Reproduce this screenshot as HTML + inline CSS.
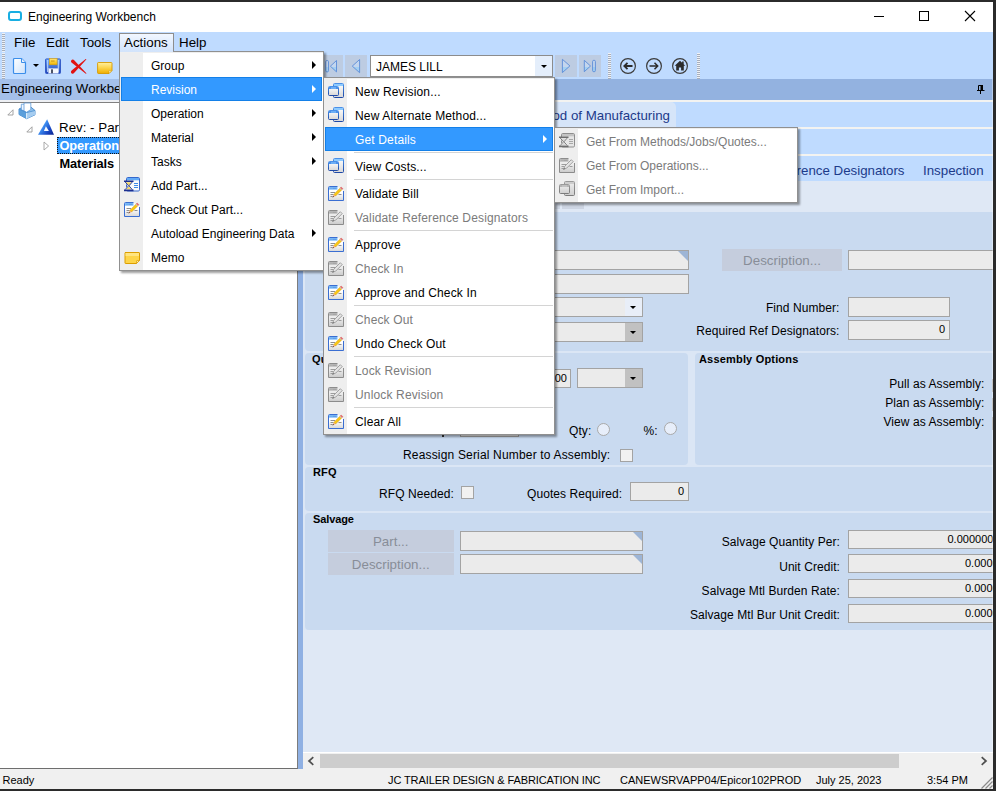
<!DOCTYPE html>
<html>
<head>
<meta charset="utf-8">
<title>Engineering Workbench</title>
<style>
*{box-sizing:border-box;margin:0;padding:0}
html,body{width:996px;height:791px;overflow:hidden;background:#2b2b2b}
body{position:relative;font-family:"Liberation Sans",Arial,sans-serif;font-size:12px;color:#000}
.a{position:absolute}
.t{position:absolute;white-space:nowrap;line-height:1}
#win{left:0;top:2px;width:993px;height:787px;background:#fff;overflow:hidden}
/* all children of #win use window coordinates offset by -2 in y; so use wrapper */
#w{position:absolute;left:0;top:-2px;width:993px;height:791px}
.grip{position:absolute;width:3px;background:repeating-linear-gradient(to bottom,#eef1f6 0,#eef1f6 1px,#a7afbd 1px,#a7afbd 2px)}
.nav{position:absolute;top:55px;height:22px;background:#bdcce2}
.fld{position:absolute;background:#ebebeb;border:1px solid #a3a3a3}
.btn{position:absolute;background:#c5cddd;color:#888d98;font-size:13.33px;text-align:center}
.grp{position:absolute;background:#c9daf0;border-radius:4px}
.gl{position:absolute;font-weight:bold;font-size:11px;white-space:nowrap;line-height:1;letter-spacing:.18px}
.lb{position:absolute;white-space:nowrap;font-size:12px;line-height:1;text-align:right;letter-spacing:.07px}
.menu{position:absolute;background:#fff;border:1px solid #909090;box-shadow:2px 2px 2px rgba(0,0,0,.38)}
.menu .gut{position:absolute;left:0;top:0;bottom:0;width:23px;background:#eeeeee}
.menu:before{content:"";position:absolute;left:0;right:0;top:0;height:1px;background:#eeeeee}
.mi{position:absolute;left:1px;right:1px;height:24px;line-height:24px;font-size:12px;white-space:nowrap}
#m2 .mi{letter-spacing:.15px}
.mi span{position:absolute;left:30px;top:1px}
.mi.dis{color:#7b7b7b}
.mi.hot{background:#3399ff;color:#fff;box-shadow:inset 0 0 0 1px #1480e8}
.sep{position:absolute;left:30px;right:1px;height:1px;background:#d4d4d4}
.arr{position:absolute;right:6px;top:8px;width:0;height:0;border-left:4px solid #000;border-top:4px solid transparent;border-bottom:4px solid transparent}
.hot .arr{border-left-color:#fff}
.ic{position:absolute;left:3px;top:4px;width:16px;height:16px}
</style>
</head>
<body>
<div id="win" class="a"><div id="w">

<!-- TITLE BAR -->
<div class="a" style="left:8px;top:11px;width:14px;height:10px;border:2px solid #19aee2;border-radius:3px;background:#fff"></div>
<div class="t" style="left:28px;top:10px;font-size:12px;line-height:14px">Engineering Workbench</div>
<svg class="a" style="left:860px;top:2px" width="133" height="30" viewBox="0 0 133 30">
 <path d="M14 14.5h10" stroke="#000" stroke-width="1" fill="none"/>
 <rect x="59.5" y="9.5" width="9" height="9" stroke="#000" stroke-width="1" fill="none"/>
 <path d="M105 9l10 10M115 9l-10 10" stroke="#000" stroke-width="1.1" fill="none"/>
</svg>

<!-- MENU BAR + TOOLBAR BACKGROUND -->
<div class="a" style="left:0;top:32px;width:993px;height:47px;background:#bfdbff"></div>
<div class="grip" style="left:2px;top:33px;height:19px"></div>
<div class="grip" style="left:2px;top:53px;height:26px"></div>
<div class="t" style="left:14px;top:35px;font-size:13.33px;line-height:15px">File</div>
<div class="t" style="left:46px;top:35px;font-size:13.33px;line-height:15px">Edit</div>
<div class="t" style="left:80px;top:35px;font-size:13.33px;line-height:15px">Tools</div>
<div class="a" style="left:119px;top:33px;width:55px;height:20px;border:1px solid #8d8d8d;border-bottom:none;background:linear-gradient(#f2f7ff,#cfe2fb)"></div>
<div class="t" style="left:124px;top:35px;font-size:13.33px;line-height:15px">Actions</div>
<div class="t" style="left:179px;top:35px;font-size:13.33px;line-height:15px">Help</div>

<!-- TOOLBAR ICONS -->
<!-- new doc -->
<svg class="a" style="left:12px;top:57px" width="16" height="18" viewBox="0 0 16 18">
 <defs><linearGradient id="gdoc" x1="0" y1="0" x2="1" y2="1"><stop offset="0" stop-color="#ffffff"/><stop offset="1" stop-color="#cfe3fb"/></linearGradient></defs>
 <path d="M2.5 1.5h7l4 4v10a1 1 0 0 1-1 1h-10a1 1 0 0 1-1-1v-13a1 1 0 0 1 1-1z" fill="url(#gdoc)" stroke="#3b8eea" stroke-width="1.2"/>
 <path d="M9.5 1.5v4h4" fill="#eaf3ff" stroke="#3b8eea" stroke-width="1"/>
</svg>
<div class="a" style="left:33px;top:64px;width:0;height:0;border-top:3px solid #000;border-left:3px solid transparent;border-right:3px solid transparent"></div>
<!-- save -->
<svg class="a" style="left:45px;top:58px" width="16" height="16" viewBox="0 0 16 16">
 <defs><linearGradient id="gsv" x1="0" y1="0" x2="0" y2="1"><stop offset="0" stop-color="#6aa6f7"/><stop offset="1" stop-color="#2243b8"/></linearGradient>
 <linearGradient id="gsy" x1="0" y1="0" x2="0" y2="1"><stop offset="0" stop-color="#ffe678"/><stop offset="1" stop-color="#f2b500"/></linearGradient></defs>
 <rect x=".5" y=".9" width="15" height="14.600" rx=".9" fill="url(#gsv)" stroke="#2c55c4" stroke-width=".9"/>
 <rect x="2" y="2" width="1.300" height="12" fill="#b9d5fb" opacity=".85"/>
 <rect x="12.700" y="2" width="1.300" height="12" fill="#b9d5fb" opacity=".85"/>
 <rect x="4.300" y=".5" width="7.800" height="6.300" fill="url(#gsy)" stroke="#d6a00e" stroke-width=".6"/>
 <rect x="6" y="2.600" width="3.600" height=".9" fill="#c78e08"/>
 <rect x="3.500" y="10.400" width="9.800" height="5" fill="#f4f7fd" stroke="#aebfe3" stroke-width=".5"/>
 <rect x="6" y="11.300" width="2" height="4" fill="#4c5468"/>
</svg>
<!-- red X -->
<svg class="a" style="left:70px;top:58px" width="18" height="17" viewBox="0 0 18 17">
 <path d="M1.200 2.600C2 1.400 3.300 1.300 4.200 2.200L16.400 15.300C16.600 15.700 16.100 16 15.800 15.700L1.800 4.800C1 4.200.8 3.300 1.200 2.600z" fill="#e11212"/>
 <path d="M1 13.600C.7 14.800 1.600 16 2.900 15.700C3.600 15.500 4.100 15.100 4.500 14.600L16.300 1.500C16.600 1.100 16.100.7 15.700 1L2.200 12C1.600 12.500 1.200 13 1 13.600z" fill="#e11212"/>
</svg>
<!-- memo -->
<svg class="a" style="left:97px;top:61px" width="16" height="14" viewBox="0 0 16 14">
 <defs><linearGradient id="gmemo" x1="0" y1="0" x2="0" y2="1"><stop offset="0" stop-color="#fff0a0"/><stop offset=".5" stop-color="#fbd34a"/><stop offset="1" stop-color="#eead00"/></linearGradient></defs>
 <path d="M1.300 1.500h13a.7.7 0 0 1 .7.700v7.300l-3 3h-10.700a.7.700 0 0 1-.7-.7v-9.600a.7.700 0 0 1 .7-.7z" fill="url(#gmemo)" stroke="#d79a00" stroke-width=".9"/>
 <path d="M14.800 9.600h-2.100a.7.700 0 0 0-.7.700v2.100z" fill="#fff8d8" stroke="#d79a00" stroke-width=".6"/>
</svg>
<!-- nav buttons -->
<div class="nav" style="left:324px;width:19px"></div>
<div class="nav" style="left:345px;width:22px"></div>
<svg class="a" style="left:324px;top:55px" width="44" height="22" viewBox="0 0 44 22">
 <defs><linearGradient id="gnv" x1="0" y1="0" x2="0" y2="1"><stop offset="0" stop-color="#c4d6ee"/><stop offset=".55" stop-color="#c4d6ee"/><stop offset=".56" stop-color="#a4d0f2"/><stop offset="1" stop-color="#a4d0f2"/></linearGradient></defs>
 <rect x="1.700" y="5.500" width="2.800" height="11.400" rx="1.200" fill="url(#gnv)" stroke="#5a8bd8" stroke-width=".9"/>
 <path d="M12.500 5.500v11.400l-6.100-5.700z" fill="url(#gnv)" stroke="#5a8bd8" stroke-width=".9" stroke-linejoin="round"/>
 <path d="M35.600 4.500v13.200l-7.300-6.600z" fill="url(#gnv)" stroke="#5a8bd8" stroke-width=".9" stroke-linejoin="round"/>
</svg>
<!-- combo -->
<div class="a" style="left:370px;top:55px;width:183px;height:22px;background:#fff;border:1px solid #8c8c8c"></div>
<div class="a" style="left:535px;top:56px;width:17px;height:20px;background:#e4eefb"></div>
<div class="a" style="left:541px;top:65px;width:0;height:0;border-top:3px solid #000;border-left:3px solid transparent;border-right:3px solid transparent"></div>
<div class="t" style="left:376px;top:60px;font-size:12px;line-height:14px">JAMES LILL</div>
<div class="nav" style="left:555px;width:22px"></div>
<div class="nav" style="left:579px;width:22px"></div>
<svg class="a" style="left:555px;top:55px" width="46" height="22" viewBox="0 0 46 22">
 <path d="M7.400 4.300v13.300l7.500-6.700z" fill="url(#gnv)" stroke="#5a8bd8" stroke-width=".9" stroke-linejoin="round"/>
 <path d="M29.300 5.300v11.400l6.200-5.700z" fill="url(#gnv)" stroke="#5a8bd8" stroke-width=".9" stroke-linejoin="round"/>
 <rect x="37.600" y="5.300" width="2.800" height="11.400" rx="1.200" fill="url(#gnv)" stroke="#5a8bd8" stroke-width=".9"/>
</svg>
<div class="grip" style="left:608px;top:53px;height:26px"></div>
<svg class="a" style="left:618px;top:56px" width="72" height="20" viewBox="0 0 72 20">
 <g fill="none" stroke="#3c3c3c" stroke-width="1.2">
  <circle cx="10" cy="10" r="7.4"/><circle cx="36" cy="10" r="7.4"/><circle cx="62" cy="10" r="7.4"/>
 </g>
 <path d="M14.5 10h-8M9.5 6.8L6.3 10l3.2 3.2" fill="none" stroke="#2b2b2b" stroke-width="1.8"/>
 <path d="M31.5 10h8M36.500 6.8L39.700 10l-3.200 3.200" fill="none" stroke="#2b2b2b" stroke-width="1.5"/>
 <path d="M62 4.800l-5.300 4.900h1.500v4.700h2.700v-3h2.200v3h2.700v-4.700h1.500l-1.600-1.500v-2.600h-1.600v1.100z" fill="#2b2b2b"/>
</svg>
<div class="grip" style="left:697px;top:53px;height:26px"></div>


<!-- LEFT PANEL -->
<div class="a" style="left:0;top:79px;width:298px;height:21px;background:#a4c0ea"></div><div class="a" style="left:0;top:100px;width:298px;height:2px;background:#eef0f4"></div>
<div class="t" style="left:1px;top:81px;font-size:13.33px;line-height:15px">Engineering Workbench</div>
<div class="a" style="left:0;top:102px;width:298px;height:667px;background:#fff;border-top:1px solid #808080;border-right:1px solid #7d7d7d;border-bottom:1px solid #6e6e6e"></div>
<!-- tree node 1 -->
<svg class="a" style="left:7px;top:109px" width="7" height="7" viewBox="0 0 7 7"><path d="M6 .8v5.200h-5.200z" fill="#fff" stroke="#9a9a9a" stroke-width=".9"/></svg>
<svg class="a" style="left:18px;top:102px" width="18" height="18" viewBox="0 0 18 18">
 <path d="M1 7l4-1.800h8l4 3.300v4.300l-8.400 3.900-7.600-4.200z" fill="#8fc0ea" stroke="#3f86cc" stroke-width=".9" stroke-linejoin="round"/>
 <path d="M1 7l7.600 3.600v6.100l-7.600-4.200z" fill="#5b9fdb"/>
 <path d="M8.600 10.600l8.400-2.100v4.300l-8.400 3.900z" fill="#a6cdf0"/>
 <path d="M3.300 2.200h4.500v7.400l-4.500-1.800z" fill="#eef6ff" stroke="#5f9bd8" stroke-width=".8"/>
 <path d="M6 1h6.800v6.500l-4.200 2.800-2.600-1.300z" fill="#ffffff" stroke="#5f9bd8" stroke-width=".8"/>
 <path d="M8.600 10.600v6" stroke="#e6f2fc" stroke-width="1"/>
 <path d="M1 7l7.600 3.600 8.400-2.100" fill="none" stroke="#3f86cc" stroke-width=".7"/>
</svg>
<!-- node 2 -->
<svg class="a" style="left:26px;top:126px" width="7" height="7" viewBox="0 0 7 7"><path d="M6 .8v5.200h-5.200z" fill="#fff" stroke="#9a9a9a" stroke-width=".9"/></svg>
<svg class="a" style="left:38px;top:119px" width="17" height="17" viewBox="0 0 17 17">
 <defs><linearGradient id="gtr" x1="0" y1=".2" x2="1" y2=".9"><stop offset="0" stop-color="#9fd2ff"/><stop offset=".35" stop-color="#3d8df0"/><stop offset=".7" stop-color="#1a49c4"/><stop offset="1" stop-color="#0a2390"/></linearGradient></defs>
 <path d="M9.100.2l6.900 15.600h-16z" fill="url(#gtr)"/>
 <path d="M7.900 7.300l3 4.700h-5z" fill="#f7fbff"/>
</svg>
<div class="t" style="left:59px;top:120px;font-size:13.33px;line-height:15px">Rev: - Part:</div>
<!-- node 3 -->
<svg class="a" style="left:43px;top:141px" width="7" height="10" viewBox="0 0 7 10"><path d="M1 1l4.600 4-4.600 4z" fill="#fff" stroke="#a0a0a0" stroke-width=".9"/></svg>
<div class="a" style="left:57px;top:137px;width:70px;height:17px;background:#3399ff;border:1px dotted #111"></div>
<div class="t" style="left:59.500px;top:138px;font-size:12.8px;line-height:15px;font-weight:bold;letter-spacing:-.1px;color:#fff">Operations</div>
<div class="t" style="left:59.500px;top:155.500px;font-size:12.8px;line-height:15px;font-weight:bold;letter-spacing:-.1px">Materials</div>

<!-- SPLITTER -->
<div class="a" style="left:298px;top:79px;width:5px;height:690px;background:#8fb0e3"></div>

<!-- RIGHT PANEL -->
<div class="a" style="left:303px;top:79px;width:690px;height:690px;background:#dfe8f5;overflow:hidden">
<div class="a" style="left:-303px;top:-79px;width:996px;height:791px">
<!-- header band -->
<div class="a" style="left:303px;top:79px;width:690px;height:21px;background:#93b2e0"></div>
<svg class="a" style="left:977px;top:85px" width="8" height="9" viewBox="0 0 8 9"><path d="M1.500 5V.5h4V5" fill="none" stroke="#000"/><rect x="3.500" y="0" width="2.500" height="5" fill="#000"/><path d="M0 5.500h7.500" stroke="#000"/><path d="M3.500 6v3" stroke="#000"/></svg>
<!-- tab rows -->
<div class="a" style="left:303px;top:100px;width:690px;height:81px;background:#f3f3f1"></div>
<div class="a" style="left:303px;top:102px;width:690px;height:25px;background:#bfdbff"></div>
<div class="a" style="left:303px;top:129px;width:690px;height:25px;background:#bfdbff"></div>
<div class="a" style="left:303px;top:156px;width:690px;height:25px;background:#bfdbff"></div>
<div class="a" style="left:500px;top:102px;width:176px;height:25px;background:#d6e5f9;border-radius:0 5px 0 0"></div>
<div class="t" style="right:326px;top:108px;font-size:13.300px;line-height:16px;color:#1c3a8a">Method of Manufacturing</div>
<div class="t" style="right:91.500px;top:163px;font-size:13.300px;line-height:16px;color:#1c3a8a">Reference Designators</div>
<div class="t" style="left:923px;top:163px;font-size:13.300px;line-height:16px;color:#1c3a8a">Inspection</div>
<!-- strip -->
<div class="a" style="left:562px;top:188px;width:22px;height:21px;background:#cdd5e3"></div><div class="a" style="left:538px;top:188px;width:22px;height:21px;background:#cdd5e3"></div>
<!-- content -->
<div class="a" style="left:303px;top:212px;width:690px;height:418px;background:#dbe6f5"></div>
<div class="grp" style="left:305px;top:212px;width:700px;height:139px;border-radius:0 0 0 4px"></div>
<div class="grp" style="left:305px;top:353px;width:383px;height:112px"></div>
<div class="grp" style="left:695px;top:353px;width:320px;height:112px"></div>
<div class="grp" style="left:305px;top:467px;width:700px;height:44px"></div>
<div class="grp" style="left:305px;top:513px;width:700px;height:117px;border-radius:4px 0 0 4px"></div>

<!-- group 1 -->
<div class="fld" style="left:400px;top:250px;width:289px;height:20px"></div>
<div class="a" style="left:678px;top:251px;width:0;height:0;border-top:10px solid #9db5d6;border-left:10px solid transparent"></div>
<div class="fld" style="left:400px;top:274px;width:289px;height:20px"></div>
<div class="fld" style="left:450px;top:297px;width:193px;height:20px"></div>
<div class="a" style="left:625px;top:298px;width:17px;height:18px;background:#e8eef8"></div>
<div class="a" style="left:630px;top:306px;width:0;height:0;border-top:3px solid #000;border-left:3px solid transparent;border-right:3px solid transparent"></div>
<div class="fld" style="left:450px;top:322px;width:193px;height:20px"></div>
<div class="a" style="left:625px;top:323px;width:17px;height:18px;background:#c1c1c1"></div>
<div class="a" style="left:630px;top:331px;width:0;height:0;border-top:3px solid #000;border-left:3px solid transparent;border-right:3px solid transparent"></div>
<div class="btn" style="left:722px;top:249px;width:120px;height:22px;line-height:23.500px">Description...</div>
<div class="fld" style="left:848px;top:250px;width:160px;height:20px"></div>
<div class="lb" style="right:156.500px;top:301px;line-height:14px">Find Number:</div>
<div class="fld" style="left:848px;top:297px;width:102px;height:20px"></div>
<div class="lb" style="right:156.500px;top:323.500px;line-height:14px">Required Ref Designators:</div>
<div class="fld" style="left:848px;top:320px;width:102px;height:20px"></div>
<div class="t" style="left:939px;top:323px;font-size:11px;line-height:12px">0</div>

<!-- group 2 -->
<div class="gl" style="left:312px;top:354px">Quantity</div>
<div class="fld" style="left:500px;top:369px;width:71px;height:19px"></div>
<div class="t" style="right:429px;top:372px;font-size:11px;line-height:12px">1.00</div>
<div class="fld" style="left:577px;top:368px;width:66px;height:20px"></div>
<div class="a" style="left:625px;top:369px;width:17px;height:18px;background:#c1c1c1"></div>
<div class="a" style="left:630px;top:377px;width:0;height:0;border-top:3px solid #000;border-left:3px solid transparent;border-right:3px solid transparent"></div>
<div class="fld" style="left:460px;top:418px;width:59px;height:19px"></div>
<div class="lb" style="left:569px;top:424px;line-height:14px">Qty:</div>
<div class="a" style="left:597px;top:423px;width:13px;height:13px;border-radius:50%;border:1px solid #a9a9a9;background:#e7eefa"></div>
<div class="lb" style="left:643.500px;top:424px;line-height:14px">%:</div>
<div class="a" style="left:664px;top:422px;width:13px;height:13px;border-radius:50%;border:1px solid #a9a9a9;background:#e7eefa"></div>
<div class="lb" style="left:403px;top:448px;line-height:14px;letter-spacing:.17px">Reassign Serial Number to Assembly:</div>
<div class="fld" style="left:620px;top:448.500px;width:13px;height:13px;background:#f1f1f1"></div>

<div class="a" style="left:442px;top:434px;width:1.500px;height:3px;background:#333"></div>
<!-- group 3 -->
<div class="gl" style="left:699px;top:354px">Assembly Options</div>
<div class="lb" style="right:11.500px;top:377px;line-height:14px">Pull as Assembly:</div>
<div class="lb" style="right:11.500px;top:396px;line-height:14px">Plan as Assembly:</div>
<div class="lb" style="right:11.500px;top:415px;line-height:14px">View as Assembly:</div>
<div class="fld" style="left:991.500px;top:379px;width:13px;height:13px"></div>
<div class="fld" style="left:991.500px;top:398px;width:13px;height:13px"></div>
<div class="fld" style="left:991.500px;top:417px;width:13px;height:13px"></div>

<!-- group 4 -->
<div class="gl" style="left:313px;top:467px">RFQ</div>
<div class="lb" style="left:379px;top:487px;line-height:14px">RFQ Needed:</div>
<div class="fld" style="left:461px;top:486px;width:13px;height:13px;background:#f1f1f1"></div>
<div class="lb" style="left:527px;top:487px;line-height:14px">Quotes Required:</div>
<div class="fld" style="left:630px;top:482px;width:59px;height:19px"></div>
<div class="t" style="left:678px;top:485px;font-size:11px;line-height:12px">0</div>

<!-- group 5 -->
<div class="gl" style="left:313px;top:514px;letter-spacing:-.12px">Salvage</div>
<div class="btn" style="left:328px;top:530px;width:125.500px;height:22px;line-height:23px">Part...</div>
<div class="btn" style="left:328px;top:553px;width:125.500px;height:22px;line-height:23px">Description...</div>
<div class="fld" style="left:460px;top:531px;width:183px;height:20px"></div>
<div class="a" style="left:633px;top:532px;width:0;height:0;border-top:9px solid #9db5d6;border-left:9px solid transparent"></div>
<div class="fld" style="left:460px;top:554px;width:183px;height:20px"></div>
<div class="a" style="left:633px;top:555px;width:0;height:0;border-top:9px solid #9db5d6;border-left:9px solid transparent"></div>
<div class="lb" style="right:156px;top:535px;line-height:14px">Salvage Quantity Per:</div>
<div class="lb" style="right:156px;top:560px;line-height:14px">Unit Credit:</div>
<div class="lb" style="right:156px;top:584px;line-height:14px">Salvage Mtl Burden Rate:</div>
<div class="lb" style="right:156px;top:608px;line-height:14px">Salvage Mtl Bur Unit Credit:</div>
<div class="fld" style="left:848px;top:530px;width:160px;height:19px"></div>
<div class="fld" style="left:848px;top:554px;width:160px;height:19px"></div>
<div class="fld" style="left:848px;top:579px;width:160px;height:19px"></div>
<div class="fld" style="left:848px;top:604px;width:160px;height:19px"></div>
<div class="t" style="left:947.500px;top:533px;font-size:11px;line-height:12px">0.00000000</div>
<div class="t" style="left:965px;top:557px;font-size:11px;line-height:12px">0.00000</div>
<div class="t" style="left:965px;top:582px;font-size:11px;line-height:12px">0.00000</div>
<div class="t" style="left:965px;top:607px;font-size:11px;line-height:12px">0.00000</div>

<!-- right edge strip -->
<div class="a" style="left:992px;top:79px;width:1px;height:673px;background:rgba(255,255,255,.35)"></div>
<!-- scrollbar -->
<div class="a" style="left:303px;top:752px;width:690px;height:17px;background:#f0f0f0;border-top:1px solid #fff"></div>
<div class="a" style="left:320px;top:754px;width:579px;height:14px;background:#cdcdcd"></div>
<svg class="a" style="left:307px;top:756px" width="8" height="10" viewBox="0 0 8 10"><path d="M6.300 1.200L2 5l4.300 3.800" stroke="#505050" stroke-width="1.700" fill="none"/></svg>
<svg class="a" style="left:980px;top:756px" width="8" height="10" viewBox="0 0 8 10"><path d="M1.700 1.200L6 5l-4.300 3.800" stroke="#505050" stroke-width="1.700" fill="none"/></svg>
</div></div>


<!-- STATUS BAR -->
<div class="a" style="left:0;top:769px;width:993px;height:20px;background:#f0f0f0"></div>
<div class="t" style="left:2.500px;top:774px;font-size:11px;line-height:12px">Ready</div>
<div class="t" style="left:388px;top:774px;font-size:11px;line-height:12px;letter-spacing:-.1px">JC TRAILER DESIGN &amp; FABRICATION INC</div>
<div class="t" style="left:620px;top:774px;font-size:11px;line-height:12px">CANEWSRVAPP04/Epicor102PROD</div>
<div class="t" style="left:816px;top:774px;font-size:11px;line-height:12px">July 25, 2023</div>
<div class="t" style="left:927px;top:774px;font-size:11px;line-height:12px">3:54 PM</div>
<svg class="a" style="left:980px;top:776px" width="13" height="13" viewBox="0 0 13 13"><path d="M12.500 1.500l-11 11M12.500 5.500l-7 7M12.500 9.500l-3 3" stroke="#8a8a8a" stroke-width="1.200" fill="none"/></svg>


<!-- MENUS -->
<!--MENUS--><div class="menu" id="m1" style="left:119px;top:51px;width:205px;height:220px"><div class="gut"></div>
<div class="mi" style="top:1px"><span>Group</span><i class="arr"></i></div>
<div class="mi hot" style="top:25px"><span>Revision</span><i class="arr"></i></div>
<div class="mi" style="top:49px"><span>Operation</span><i class="arr"></i></div>
<div class="mi" style="top:73px"><span>Material</span><i class="arr"></i></div>
<div class="mi" style="top:97px"><span>Tasks</span><i class="arr"></i></div>
<div class="mi" style="top:121px"><svg class="ic" viewBox="0 0 16 16"><rect x="2.500" y=".5" width="13" height="13.500" rx="1.200" fill="#fbfbfb" stroke="#3467cc"/><rect x="3" y="1" width="12" height="2.300" fill="#62aaf6"/><path d="M10 6.500h4M10 8.500h4M10 10.500h4" stroke="#3f8be8" stroke-width="1.100"/><path d="M.5 4h8.500v1.200l-3.200 3.600 3.200 3.600v1.400h-8.500v-1.400l3.200-3.600-3.200-3.600z" fill="#fff"/><path d="M1.600 5.300h6.300l-3.150 3.500zM4.750 9.200l2.600 3h-5.200z" fill="#f1d66b"/><path d="M1.200 5l3.300 3.800-3.300 3.800M8.300 5l-3.300 3.800 3.300 3.800" fill="none" stroke="#1c2f8f" stroke-width=".9"/><path d="M0 3.400h9.500v1.700h-9.500zM0 12.500h9.500v1.800h-9.500z" fill="#1c2f8f"/></svg><span>Add Part...</span></div>
<div class="mi" style="top:145px"><svg class="ic" viewBox="0 0 16 16"><linearGradient id="gnbc" x1="0" y1="0" x2="0" y2="1"><stop offset="0" stop-color="#ffffff"/><stop offset=".45" stop-color="#ffffff"/><stop offset="1" stop-color="#dadada"/></linearGradient><path d="M1 2h9l5 3.500v9.500h-14z" fill="url(#gnbc)"/><path d="M.5 15.500v-13a1 1 0 0 1 1-1h8M.5 15.500h15v-9.500" fill="none" stroke="#3a6ed2" stroke-width="1"/><rect x="1" y="2" width="8.500" height="2.700" fill="#7cbcf8"/><path d="M2.500 3.300h1M4.500 3.300h4" stroke="#3a6ed2" stroke-width=".9" opacity=".55"/><path d="M2.500 7.500h4.500M2.500 9.500h3M2.500 11.500h2M10.500 9.500h3" stroke="#8f8f8f" stroke-width="1" fill="none"/><path d="M12 3.200l1.700 1.700-6.200 6.200-1.700-1.700z" fill="#fbc913" stroke="#c98c00" stroke-width=".5"/><path d="M12.200 3l1-1 1.700 1.700-1 1z" fill="#ee6e6e" stroke="#c64545" stroke-width=".45"/><path d="M11.600 3.600l.55-.55 1.700 1.700-.55.550z" fill="#cfcfcf"/><path d="M5.800 9.400l1.700 1.700-3 1.300z" fill="#f2a57c"/><path d="M4.500 12.400l1.300-.55-.75-.75z" fill="#111"/></svg><span>Check Out Part...</span></div>
<div class="mi" style="top:169px"><span>Autoload Engineering Data</span><i class="arr"></i></div>
<div class="mi" style="top:193px"><svg class="ic" viewBox="0 0 16 16"><path d="M1 3.500h14a.5.5 0 0 1 .5.500v7.500l-3 3h-11a.5.5 0 0 1-.5-.5v-10a.5.5 0 0 1 .5-.5z" fill="#fdd54a" stroke="#dc9e00"/><path d="M1.500 4h13.500v3h-13.500z" fill="#ffe88e" opacity=".8"/><path d="M15.300 11.500h-2.300a.5.5 0 0 0-.5.500v2.300z" fill="#fff7d6" stroke="#dc9e00" stroke-width=".7"/></svg><span>Memo</span></div>
</div>
<div class="menu" id="m2" style="left:323px;top:77px;width:232px;height:358px"><div class="gut"></div>
<div class="mi" style="top:1px"><svg class="ic" viewBox="0 0 16 16"><linearGradient id="gwc" x1="0" y1="0" x2="0" y2="1"><stop offset="0" stop-color="#4a90e8"/><stop offset="1" stop-color="#1d48a6"/></linearGradient><linearGradient id="gwcb" x1="0" y1="0" x2="0" y2="1"><stop offset="0" stop-color="#ffffff"/><stop offset="1" stop-color="#d8d8d8"/></linearGradient><rect x="5.500" y=".5" width="10" height="14" rx="1" fill="url(#gwcb)" stroke="url(#gwc)"/><rect x="6" y="1" width="9" height="2" fill="#8ecbff"/><rect x=".5" y="3.500" width="10" height="9" rx="1" fill="url(#gwcb)" stroke="url(#gwc)"/><rect x="1" y="4" width="9" height="2" fill="#4a90ea"/><rect x="3" y="4.500" width="5" height="1" fill="#8ecbff"/></svg><span>New Revision...</span></div>
<div class="mi" style="top:25px"><svg class="ic" viewBox="0 0 16 16"><linearGradient id="gwc" x1="0" y1="0" x2="0" y2="1"><stop offset="0" stop-color="#4a90e8"/><stop offset="1" stop-color="#1d48a6"/></linearGradient><linearGradient id="gwcb" x1="0" y1="0" x2="0" y2="1"><stop offset="0" stop-color="#ffffff"/><stop offset="1" stop-color="#d8d8d8"/></linearGradient><rect x="5.500" y=".5" width="10" height="14" rx="1" fill="url(#gwcb)" stroke="url(#gwc)"/><rect x="6" y="1" width="9" height="2" fill="#8ecbff"/><rect x=".5" y="3.500" width="10" height="9" rx="1" fill="url(#gwcb)" stroke="url(#gwc)"/><rect x="1" y="4" width="9" height="2" fill="#4a90ea"/><rect x="3" y="4.500" width="5" height="1" fill="#8ecbff"/></svg><span>New Alternate Method...</span></div>
<div class="mi hot" style="top:49px"><span>Get Details</span><i class="arr"></i></div>
<div class="sep" style="top:74px"></div>
<div class="mi" style="top:76px"><svg class="ic" viewBox="0 0 16 16"><linearGradient id="gwc" x1="0" y1="0" x2="0" y2="1"><stop offset="0" stop-color="#4a90e8"/><stop offset="1" stop-color="#1d48a6"/></linearGradient><linearGradient id="gwcb" x1="0" y1="0" x2="0" y2="1"><stop offset="0" stop-color="#ffffff"/><stop offset="1" stop-color="#d8d8d8"/></linearGradient><rect x="5.500" y=".5" width="10" height="14" rx="1" fill="url(#gwcb)" stroke="url(#gwc)"/><rect x="6" y="1" width="9" height="2" fill="#8ecbff"/><rect x=".5" y="3.500" width="10" height="9" rx="1" fill="url(#gwcb)" stroke="url(#gwc)"/><rect x="1" y="4" width="9" height="2" fill="#4a90ea"/><rect x="3" y="4.500" width="5" height="1" fill="#8ecbff"/></svg><span>View Costs...</span></div>
<div class="sep" style="top:101px"></div>
<div class="mi" style="top:103px"><svg class="ic" viewBox="0 0 16 16"><linearGradient id="gnbc" x1="0" y1="0" x2="0" y2="1"><stop offset="0" stop-color="#ffffff"/><stop offset=".45" stop-color="#ffffff"/><stop offset="1" stop-color="#dadada"/></linearGradient><path d="M1 2h9l5 3.500v9.500h-14z" fill="url(#gnbc)"/><path d="M.5 15.500v-13a1 1 0 0 1 1-1h8M.5 15.500h15v-9.500" fill="none" stroke="#3a6ed2" stroke-width="1"/><rect x="1" y="2" width="8.500" height="2.700" fill="#7cbcf8"/><path d="M2.500 3.300h1M4.500 3.300h4" stroke="#3a6ed2" stroke-width=".9" opacity=".55"/><path d="M2.500 7.500h4.500M2.500 9.500h3M2.500 11.500h2M10.500 9.500h3" stroke="#8f8f8f" stroke-width="1" fill="none"/><path d="M12 3.200l1.700 1.700-6.200 6.200-1.700-1.700z" fill="#fbc913" stroke="#c98c00" stroke-width=".5"/><path d="M12.200 3l1-1 1.700 1.700-1 1z" fill="#ee6e6e" stroke="#c64545" stroke-width=".45"/><path d="M11.600 3.600l.55-.55 1.700 1.700-.55.550z" fill="#cfcfcf"/><path d="M5.800 9.400l1.700 1.700-3 1.300z" fill="#f2a57c"/><path d="M4.500 12.400l1.300-.55-.75-.75z" fill="#111"/></svg><span>Validate Bill</span></div>
<div class="mi dis" style="top:127px"><svg class="ic" viewBox="0 0 16 16"><linearGradient id="gnbg" x1="0" y1="0" x2="0" y2="1"><stop offset="0" stop-color="#ececec"/><stop offset=".45" stop-color="#ececec"/><stop offset="1" stop-color="#cdcdcd"/></linearGradient><path d="M1 2h9l5 3.500v9.500h-14z" fill="url(#gnbg)"/><path d="M.5 15.500v-13a1 1 0 0 1 1-1h8M.5 15.500h15v-9.500" fill="none" stroke="#8c8c8c" stroke-width="1"/><rect x="1" y="2" width="8.500" height="2.700" fill="#b9b9b9"/><path d="M2.500 3.300h1M4.500 3.300h4" stroke="#8c8c8c" stroke-width=".9" opacity=".55"/><path d="M2.500 7.500h4.500M2.500 9.500h3M2.500 11.500h2M10.500 9.500h3" stroke="#9d9d9d" stroke-width="1" fill="none"/><path d="M12.300 2.700l1.900 1.900-6.500 6.500-3.100 1.200 1.200-3.100z" fill="#e4e4e4" stroke="#8f8f8f" stroke-width=".8" stroke-linejoin="round"/><path d="M4.400 12.600l1.500-.6-.9-.9z" fill="#444"/></svg><span>Validate Reference Designators</span></div>
<div class="sep" style="top:152px"></div>
<div class="mi" style="top:154px"><svg class="ic" viewBox="0 0 16 16"><linearGradient id="gnbc" x1="0" y1="0" x2="0" y2="1"><stop offset="0" stop-color="#ffffff"/><stop offset=".45" stop-color="#ffffff"/><stop offset="1" stop-color="#dadada"/></linearGradient><path d="M1 2h9l5 3.500v9.500h-14z" fill="url(#gnbc)"/><path d="M.5 15.500v-13a1 1 0 0 1 1-1h8M.5 15.500h15v-9.500" fill="none" stroke="#3a6ed2" stroke-width="1"/><rect x="1" y="2" width="8.500" height="2.700" fill="#7cbcf8"/><path d="M2.500 3.300h1M4.500 3.300h4" stroke="#3a6ed2" stroke-width=".9" opacity=".55"/><path d="M2.500 7.500h4.500M2.500 9.500h3M2.500 11.500h2M10.500 9.500h3" stroke="#8f8f8f" stroke-width="1" fill="none"/><path d="M12 3.200l1.700 1.700-6.200 6.200-1.700-1.700z" fill="#fbc913" stroke="#c98c00" stroke-width=".5"/><path d="M12.200 3l1-1 1.700 1.700-1 1z" fill="#ee6e6e" stroke="#c64545" stroke-width=".45"/><path d="M11.600 3.600l.55-.55 1.700 1.700-.55.550z" fill="#cfcfcf"/><path d="M5.800 9.400l1.700 1.700-3 1.300z" fill="#f2a57c"/><path d="M4.500 12.400l1.300-.55-.75-.75z" fill="#111"/></svg><span>Approve</span></div>
<div class="mi dis" style="top:178px"><svg class="ic" viewBox="0 0 16 16"><linearGradient id="gnbg" x1="0" y1="0" x2="0" y2="1"><stop offset="0" stop-color="#ececec"/><stop offset=".45" stop-color="#ececec"/><stop offset="1" stop-color="#cdcdcd"/></linearGradient><path d="M1 2h9l5 3.500v9.500h-14z" fill="url(#gnbg)"/><path d="M.5 15.500v-13a1 1 0 0 1 1-1h8M.5 15.500h15v-9.500" fill="none" stroke="#8c8c8c" stroke-width="1"/><rect x="1" y="2" width="8.500" height="2.700" fill="#b9b9b9"/><path d="M2.500 3.300h1M4.500 3.300h4" stroke="#8c8c8c" stroke-width=".9" opacity=".55"/><path d="M2.500 7.500h4.500M2.500 9.500h3M2.500 11.500h2M10.500 9.500h3" stroke="#9d9d9d" stroke-width="1" fill="none"/><path d="M12.300 2.700l1.900 1.900-6.500 6.500-3.100 1.200 1.200-3.100z" fill="#e4e4e4" stroke="#8f8f8f" stroke-width=".8" stroke-linejoin="round"/><path d="M4.400 12.600l1.500-.6-.9-.9z" fill="#444"/></svg><span>Check In</span></div>
<div class="mi" style="top:202px"><svg class="ic" viewBox="0 0 16 16"><linearGradient id="gnbc" x1="0" y1="0" x2="0" y2="1"><stop offset="0" stop-color="#ffffff"/><stop offset=".45" stop-color="#ffffff"/><stop offset="1" stop-color="#dadada"/></linearGradient><path d="M1 2h9l5 3.500v9.500h-14z" fill="url(#gnbc)"/><path d="M.5 15.500v-13a1 1 0 0 1 1-1h8M.5 15.500h15v-9.500" fill="none" stroke="#3a6ed2" stroke-width="1"/><rect x="1" y="2" width="8.500" height="2.700" fill="#7cbcf8"/><path d="M2.500 3.300h1M4.500 3.300h4" stroke="#3a6ed2" stroke-width=".9" opacity=".55"/><path d="M2.500 7.500h4.500M2.500 9.500h3M2.500 11.500h2M10.500 9.500h3" stroke="#8f8f8f" stroke-width="1" fill="none"/><path d="M12 3.200l1.700 1.700-6.200 6.200-1.700-1.700z" fill="#fbc913" stroke="#c98c00" stroke-width=".5"/><path d="M12.200 3l1-1 1.700 1.700-1 1z" fill="#ee6e6e" stroke="#c64545" stroke-width=".45"/><path d="M11.600 3.600l.55-.55 1.700 1.700-.55.550z" fill="#cfcfcf"/><path d="M5.800 9.400l1.700 1.700-3 1.300z" fill="#f2a57c"/><path d="M4.500 12.400l1.300-.55-.75-.75z" fill="#111"/></svg><span>Approve and Check In</span></div>
<div class="sep" style="top:227px"></div>
<div class="mi dis" style="top:229px"><svg class="ic" viewBox="0 0 16 16"><linearGradient id="gnbg" x1="0" y1="0" x2="0" y2="1"><stop offset="0" stop-color="#ececec"/><stop offset=".45" stop-color="#ececec"/><stop offset="1" stop-color="#cdcdcd"/></linearGradient><path d="M1 2h9l5 3.500v9.500h-14z" fill="url(#gnbg)"/><path d="M.5 15.500v-13a1 1 0 0 1 1-1h8M.5 15.500h15v-9.500" fill="none" stroke="#8c8c8c" stroke-width="1"/><rect x="1" y="2" width="8.500" height="2.700" fill="#b9b9b9"/><path d="M2.500 3.300h1M4.500 3.300h4" stroke="#8c8c8c" stroke-width=".9" opacity=".55"/><path d="M2.500 7.500h4.500M2.500 9.500h3M2.500 11.500h2M10.500 9.500h3" stroke="#9d9d9d" stroke-width="1" fill="none"/><path d="M12.300 2.700l1.900 1.900-6.500 6.500-3.100 1.200 1.200-3.100z" fill="#e4e4e4" stroke="#8f8f8f" stroke-width=".8" stroke-linejoin="round"/><path d="M4.400 12.600l1.500-.6-.9-.9z" fill="#444"/></svg><span>Check Out</span></div>
<div class="mi" style="top:253px"><svg class="ic" viewBox="0 0 16 16"><linearGradient id="gnbc" x1="0" y1="0" x2="0" y2="1"><stop offset="0" stop-color="#ffffff"/><stop offset=".45" stop-color="#ffffff"/><stop offset="1" stop-color="#dadada"/></linearGradient><path d="M1 2h9l5 3.500v9.500h-14z" fill="url(#gnbc)"/><path d="M.5 15.500v-13a1 1 0 0 1 1-1h8M.5 15.500h15v-9.500" fill="none" stroke="#3a6ed2" stroke-width="1"/><rect x="1" y="2" width="8.500" height="2.700" fill="#7cbcf8"/><path d="M2.500 3.300h1M4.500 3.300h4" stroke="#3a6ed2" stroke-width=".9" opacity=".55"/><path d="M2.500 7.500h4.500M2.500 9.500h3M2.500 11.500h2M10.500 9.500h3" stroke="#8f8f8f" stroke-width="1" fill="none"/><path d="M12 3.200l1.700 1.700-6.200 6.200-1.700-1.700z" fill="#fbc913" stroke="#c98c00" stroke-width=".5"/><path d="M12.200 3l1-1 1.700 1.700-1 1z" fill="#ee6e6e" stroke="#c64545" stroke-width=".45"/><path d="M11.600 3.600l.55-.55 1.700 1.700-.55.550z" fill="#cfcfcf"/><path d="M5.800 9.400l1.700 1.700-3 1.300z" fill="#f2a57c"/><path d="M4.500 12.400l1.300-.55-.75-.75z" fill="#111"/></svg><span>Undo Check Out</span></div>
<div class="sep" style="top:278px"></div>
<div class="mi dis" style="top:280px"><svg class="ic" viewBox="0 0 16 16"><linearGradient id="gnbg" x1="0" y1="0" x2="0" y2="1"><stop offset="0" stop-color="#ececec"/><stop offset=".45" stop-color="#ececec"/><stop offset="1" stop-color="#cdcdcd"/></linearGradient><path d="M1 2h9l5 3.500v9.500h-14z" fill="url(#gnbg)"/><path d="M.5 15.500v-13a1 1 0 0 1 1-1h8M.5 15.500h15v-9.500" fill="none" stroke="#8c8c8c" stroke-width="1"/><rect x="1" y="2" width="8.500" height="2.700" fill="#b9b9b9"/><path d="M2.500 3.300h1M4.500 3.300h4" stroke="#8c8c8c" stroke-width=".9" opacity=".55"/><path d="M2.500 7.500h4.500M2.500 9.500h3M2.500 11.500h2M10.500 9.500h3" stroke="#9d9d9d" stroke-width="1" fill="none"/><path d="M12.300 2.700l1.900 1.900-6.500 6.500-3.100 1.200 1.200-3.100z" fill="#e4e4e4" stroke="#8f8f8f" stroke-width=".8" stroke-linejoin="round"/><path d="M4.400 12.600l1.500-.6-.9-.9z" fill="#444"/></svg><span>Lock Revision</span></div>
<div class="mi dis" style="top:304px"><svg class="ic" viewBox="0 0 16 16"><linearGradient id="gnbg" x1="0" y1="0" x2="0" y2="1"><stop offset="0" stop-color="#ececec"/><stop offset=".45" stop-color="#ececec"/><stop offset="1" stop-color="#cdcdcd"/></linearGradient><path d="M1 2h9l5 3.500v9.500h-14z" fill="url(#gnbg)"/><path d="M.5 15.500v-13a1 1 0 0 1 1-1h8M.5 15.500h15v-9.500" fill="none" stroke="#8c8c8c" stroke-width="1"/><rect x="1" y="2" width="8.500" height="2.700" fill="#b9b9b9"/><path d="M2.500 3.300h1M4.500 3.300h4" stroke="#8c8c8c" stroke-width=".9" opacity=".55"/><path d="M2.500 7.500h4.500M2.500 9.500h3M2.500 11.500h2M10.500 9.500h3" stroke="#9d9d9d" stroke-width="1" fill="none"/><path d="M12.300 2.700l1.900 1.900-6.500 6.500-3.100 1.200 1.200-3.100z" fill="#e4e4e4" stroke="#8f8f8f" stroke-width=".8" stroke-linejoin="round"/><path d="M4.400 12.600l1.500-.6-.9-.9z" fill="#444"/></svg><span>Unlock Revision</span></div>
<div class="sep" style="top:329px"></div>
<div class="mi" style="top:331px"><svg class="ic" viewBox="0 0 16 16"><linearGradient id="gnbc" x1="0" y1="0" x2="0" y2="1"><stop offset="0" stop-color="#ffffff"/><stop offset=".45" stop-color="#ffffff"/><stop offset="1" stop-color="#dadada"/></linearGradient><path d="M1 2h9l5 3.500v9.500h-14z" fill="url(#gnbc)"/><path d="M.5 15.500v-13a1 1 0 0 1 1-1h8M.5 15.500h15v-9.500" fill="none" stroke="#3a6ed2" stroke-width="1"/><rect x="1" y="2" width="8.500" height="2.700" fill="#7cbcf8"/><path d="M2.500 3.300h1M4.500 3.300h4" stroke="#3a6ed2" stroke-width=".9" opacity=".55"/><path d="M2.500 7.500h4.500M2.500 9.500h3M2.500 11.500h2M10.500 9.500h3" stroke="#8f8f8f" stroke-width="1" fill="none"/><path d="M12 3.200l1.700 1.700-6.200 6.200-1.700-1.700z" fill="#fbc913" stroke="#c98c00" stroke-width=".5"/><path d="M12.200 3l1-1 1.700 1.700-1 1z" fill="#ee6e6e" stroke="#c64545" stroke-width=".45"/><path d="M11.600 3.600l.55-.55 1.700 1.700-.55.550z" fill="#cfcfcf"/><path d="M5.800 9.400l1.700 1.700-3 1.300z" fill="#f2a57c"/><path d="M4.500 12.400l1.300-.55-.75-.75z" fill="#111"/></svg><span>Clear All</span></div>
</div>
<div class="menu" id="m3" style="left:554px;top:127px;width:244px;height:76px"><div class="gut"></div>
<div class="mi dis" style="top:1px"><svg class="ic" viewBox="0 0 16 16"><rect x="2.500" y=".5" width="13" height="13.500" rx="1.200" fill="#e6e6e6" stroke="#8e8e8e"/><rect x="3" y="1" width="12" height="2.300" fill="#c4c4c4"/><path d="M10 6.500h4M10 8.500h4M10 10.500h4" stroke="#a8a8a8" stroke-width="1.100"/><path d="M.5 4h8.500v1.200l-3.200 3.600 3.200 3.600v1.400h-8.500v-1.400l3.200-3.600-3.200-3.600z" fill="#fff"/><path d="M1.600 5.300h6.300l-3.150 3.500zM4.750 9.200l2.600 3h-5.200z" fill="#d9d9d9"/><path d="M1.200 5l3.300 3.800-3.300 3.800M8.300 5l-3.300 3.800 3.300 3.800" fill="none" stroke="#6e6e6e" stroke-width=".9"/><path d="M0 3.400h9.500v1.700h-9.500zM0 12.500h9.500v1.800h-9.500z" fill="#6e6e6e"/></svg><span>Get From Methods/Jobs/Quotes...</span></div>
<div class="mi dis" style="top:25px"><svg class="ic" viewBox="0 0 16 16"><linearGradient id="gnbg" x1="0" y1="0" x2="0" y2="1"><stop offset="0" stop-color="#ececec"/><stop offset=".45" stop-color="#ececec"/><stop offset="1" stop-color="#cdcdcd"/></linearGradient><path d="M1 2h9l5 3.500v9.500h-14z" fill="url(#gnbg)"/><path d="M.5 15.500v-13a1 1 0 0 1 1-1h8M.5 15.500h15v-9.500" fill="none" stroke="#8c8c8c" stroke-width="1"/><rect x="1" y="2" width="8.500" height="2.700" fill="#b9b9b9"/><path d="M2.500 3.300h1M4.500 3.300h4" stroke="#8c8c8c" stroke-width=".9" opacity=".55"/><path d="M2.500 7.500h4.500M2.500 9.500h3M2.500 11.500h2M10.500 9.500h3" stroke="#9d9d9d" stroke-width="1" fill="none"/><path d="M12.300 2.700l1.900 1.900-6.500 6.500-3.100 1.200 1.200-3.100z" fill="#e4e4e4" stroke="#8f8f8f" stroke-width=".8" stroke-linejoin="round"/><path d="M4.400 12.600l1.500-.6-.9-.9z" fill="#444"/></svg><span>Get From Operations...</span></div>
<div class="mi dis" style="top:49px"><svg class="ic" viewBox="0 0 16 16"><linearGradient id="gwg" x1="0" y1="0" x2="0" y2="1"><stop offset="0" stop-color="#9a9a9a"/><stop offset="1" stop-color="#7c7c7c"/></linearGradient><linearGradient id="gwgb" x1="0" y1="0" x2="0" y2="1"><stop offset="0" stop-color="#efefef"/><stop offset="1" stop-color="#cfcfcf"/></linearGradient><rect x="5.500" y=".5" width="10" height="14" rx="1" fill="url(#gwgb)" stroke="url(#gwg)"/><rect x="6" y="1" width="9" height="2" fill="#cdcdcd"/><rect x=".5" y="3.500" width="10" height="9" rx="1" fill="url(#gwgb)" stroke="url(#gwg)"/><rect x="1" y="4" width="9" height="2" fill="#b4b4b4"/><rect x="3" y="4.500" width="5" height="1" fill="#cdcdcd"/></svg><span>Get From Import...</span></div>
</div>
<div class="a" style="left:120px;top:51px;width:53px;height:1px;background:#d3e4fb"></div><div class="a" style="left:120px;top:52px;width:53px;height:1px;background:#efefef"></div><!--/MENUS-->

</div></div>
</body>
</html>
